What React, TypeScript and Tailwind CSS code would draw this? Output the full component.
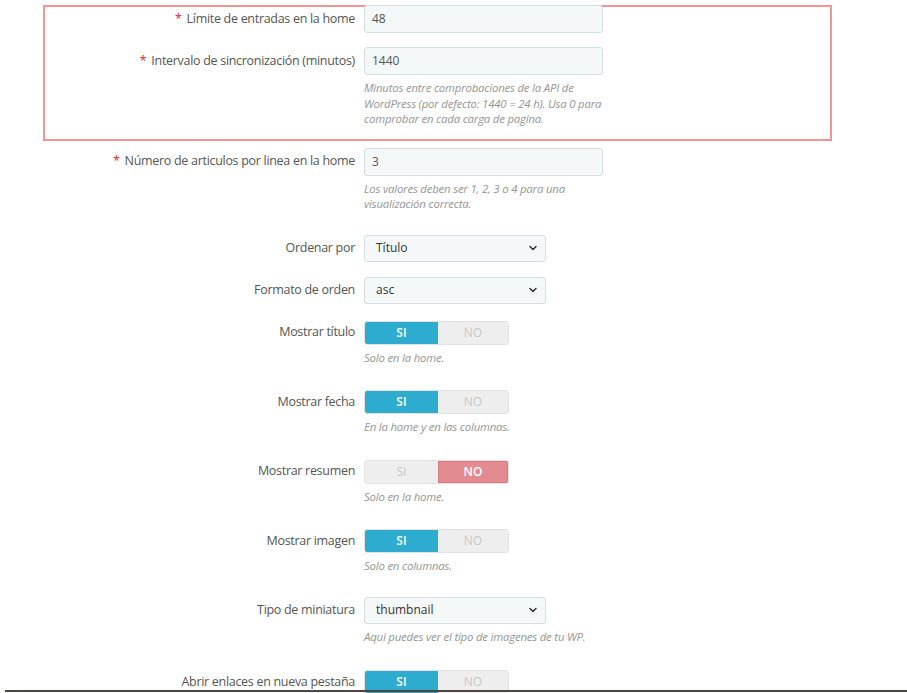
import React from 'react';
import { ChevronDown } from 'lucide-react';

const font = { fontFamily: '"Open Sans", "Liberation Sans", sans-serif' };

const Label: React.FC<{ text: string; required?: boolean; h: string }> = ({ text, required, h }) => (
  <div className={`w-[310px] shrink-0 flex items-center justify-end text-[12.5px] text-[#555] tracking-[-0.3px] ${h}`}>
    {required && <span className="text-[#e3262e] mr-[5px]">*</span>}
    {text}
  </div>
);

const Help: React.FC<{ children: React.ReactNode }> = ({ children }) => (
  <p className="mt-[5px] w-[248px] text-[11.4px] leading-[15.5px] italic text-[#959595] tracking-[-0.2px]">{children}</p>
);

const TextInput: React.FC<{ value: string }> = ({ value }) => (
  <div className="w-[239px] h-[28px] bg-[#f5f8f9] border border-[#d3dfe3] rounded-[3px] px-[7px] flex items-center text-[12px] text-[#555]">
    {value}
  </div>
);

const Select: React.FC<{ value: string }> = ({ value }) => (
  <div className="w-[182px] h-[27px] bg-[#f5f8f9] border border-[#d3dfe3] rounded-[3px] pl-[11px] pr-[6px] flex items-center justify-between text-[12px] text-[#333]">
    <span>{value}</span>
    <ChevronDown size={12} strokeWidth={3} className="text-[#333]" />
  </div>
);

const Toggle: React.FC<{ on: boolean }> = ({ on }) => (
  <div className="flex w-[145px] h-[24px] rounded-[3px] overflow-hidden border border-[#e2e2e2] text-[12px]">
    <div
      className={`w-[73px] flex items-center justify-center ${
        on ? 'bg-[#2eaccf] text-white font-semibold' : 'bg-[#eeeeee] text-[#c8c8c8]'
      }`}
    >
      SI
    </div>
    <div
      className={`flex-1 flex items-center justify-center ${
        on ? 'bg-[#eeeeee] text-[#c8c8c8]' : 'bg-[#e28c91] text-white font-semibold border border-[#d97a80]'
      }`}
    >
      NO
    </div>
  </div>
);

const Row: React.FC<{ label: string; required?: boolean; h: string; className?: string; children: React.ReactNode }> = ({
  label,
  required,
  h,
  className = '',
  children,
}) => (
  <div className={`flex gap-[9px] items-start ${className}`}>
    <Label text={label} required={required} h={h} />
    <div>{children}</div>
  </div>
);

export default function App() {
  return (
    <div className="relative w-[907px] h-[693px] overflow-hidden bg-white" style={font}>
      <div className="ml-[43px] w-[789px]">
        <div className="mt-[5px] border-2 border-[#f39595] pb-[12px]">
          <Row label="Límite de entradas en la home" required h="h-[28px]" className="-mt-[2px]">
            <TextInput value="48" />
          </Row>
          <Row label="Intervalo de sincronización (minutos)" required h="h-[28px]" className="mt-[14px]">
            <TextInput value="1440" />
            <Help>
              Minutos entre comprobaciones de la API de WordPress (por defecto: 1440 = 24 h). Usa 0 para comprobar en cada
              carga de pagina.
            </Help>
          </Row>
        </div>

        <div className="border-x-2 border-transparent">
          <Row label="Número de articulos por linea en la home" required h="h-[28px]" className="mt-[7px]">
            <TextInput value="3" />
            <Help>Los valores deben ser 1, 2, 3 o 4 para una visualización correcta.</Help>
          </Row>

          <Row label="Ordenar por" h="h-[27px]" className="mt-[23px]">
            <Select value="Título" />
          </Row>

          <Row label="Formato de orden" h="h-[27px]" className="mt-[15px]">
            <Select value="asc" />
          </Row>

          <Row label="Mostrar título" h="h-[24px]" className="mt-[17px]">
            <Toggle on />
            <Help>Solo en la home.</Help>
          </Row>

          <Row label="Mostrar fecha" h="h-[24px]" className="mt-[25px]">
            <Toggle on />
            <Help>En la home y en las columnas.</Help>
          </Row>

          <Row label="Mostrar resumen" h="h-[24px]" className="mt-[25px]">
            <Toggle on={false} />
            <Help>Solo en la home.</Help>
          </Row>

          <Row label="Mostrar imagen" h="h-[24px]" className="mt-[25px]">
            <Toggle on />
            <Help>Solo en columnas.</Help>
          </Row>

          <Row label="Tipo de miniatura" h="h-[27px]" className="mt-[23px]">
            <Select value="thumbnail" />
            <Help>
              <span className="whitespace-nowrap">Aqui puedes ver el tipo de imagenes de tu WP.</span>
            </Help>
          </Row>

          <Row label="Abrir enlaces en nueva pestaña" h="h-[24px]" className="mt-[26px]">
            <Toggle on />
          </Row>
        </div>
      </div>

      <div className="absolute left-[5px] right-0 bottom-[1px] h-[2px] bg-[#4f4444]" />
    </div>
  );
}
